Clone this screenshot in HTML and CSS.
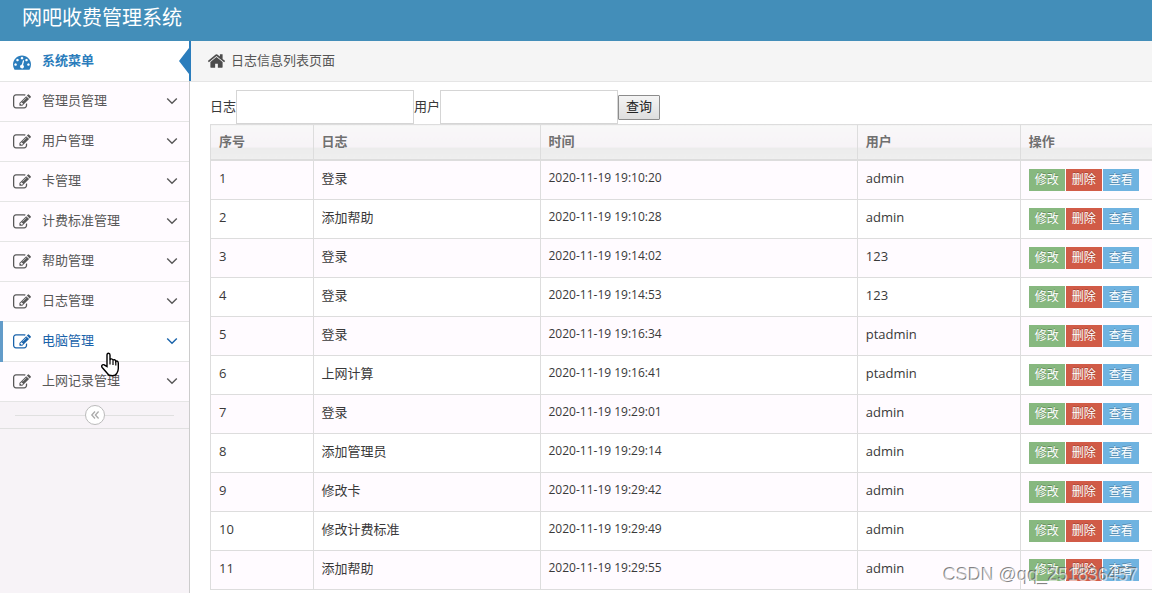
FILE: index.html
```html
<!DOCTYPE html>
<html lang="zh-CN">
<head>
<meta charset="utf-8">
<title>网吧收费管理系统</title>
<link rel="stylesheet" href="styles.css">
</head>
<body>
<svg class="defs" aria-hidden="true">
  <symbol id="edit" viewBox="0 0 1792 1792"><path d="M888 1184l116-116-152-152-116 116v56h96v96h56zm440-720q-16-16-33 1l-350 350q-17 17-1 33t33-1l350-350q17-17 1-33zm80 594v190q0 119-84.500 203.500t-203.500 84.500h-832q-119 0-203.500-84.500t-84.500-203.500v-832q0-119 84.500-203.500t203.500-84.500h832q63 0 117 25 15 7 18 23 3 17-9 29l-49 49q-14 14-32 8-23-6-45-6h-832q-66 0-113 47t-47 113v832q0 66 47 113t113 47h832q66 0 113-47t47-113v-126q0-13 9-22l64-64q15-15 35-7t20 29zm-96-738l288 288-672 672h-288v-288zm444 132l-92 92-288-288 92-92q28-28 68-28t68 28l152 152q28 28 28 68t-28 68z"/></symbol>
  <symbol id="down" viewBox="0 0 12 8"><path d="M1.200 1.500 6 6.200l4.800-4.700" fill="none" stroke="currentColor" stroke-width="1.400"/></symbol>
</svg>
<header class="navbar"><h1 class="brand">网吧收费管理系统</h1></header>
<div class="layout">
  <aside class="sidebar">
    <nav>
      <ul class="menu">
        <li class="item active"><a href="#"><svg class="icon" viewBox="0 0 1792 1792"><path d="M384 1152q0-53-37.500-90.500t-90.500-37.500-90.500 37.500-37.500 90.500 37.500 90.500 90.500 37.500 90.500-37.500 37.500-90.500zm192-448q0-53-37.500-90.500t-90.500-37.500-90.500 37.500-37.500 90.500 37.500 90.500 90.500 37.500 90.500-37.500 37.500-90.500zm428 481l101-382q6-26-7.500-48.500t-38.500-29.500-48 6.500-30 39.500l-101 382q-60 5-107 43.500t-63 98.500q-20 77 20 146t117 89 146-20 89-117q16-60-6-117t-72-91zm660-33q0-53-37.500-90.500t-90.500-37.500-90.500 37.500-37.500 90.500 37.500 90.500 90.500 37.500 90.500-37.500 37.500-90.500zm-640-640q0-53-37.500-90.500t-90.500-37.500-90.500 37.500-37.500 90.500 37.500 90.500 90.500 37.500 90.500-37.500 37.500-90.500zm448 192q0-53-37.500-90.500t-90.500-37.500-90.500 37.500-37.500 90.500 37.500 90.500 90.500 37.500 90.500-37.500 37.500-90.500zm320 448q0 261-141 483-19 29-54 29h-1402q-35 0-54-29-141-221-141-483 0-182 71-348t191-286 286-191 348-71 348 71 286 191 191 286 71 348z"/></svg><span>系统菜单</span></a><svg class="marker" viewBox="0 0 12 40"><path d="M10 0h2v40h-2v-7L0 20 10 7z"/></svg></li>
        <li class="item"><a href="#"><svg class="icon"><use href="#edit"/></svg><span>管理员管理</span><svg class="arrow"><use href="#down"/></svg></a></li>
        <li class="item"><a href="#"><svg class="icon"><use href="#edit"/></svg><span>用户管理</span><svg class="arrow"><use href="#down"/></svg></a></li>
        <li class="item"><a href="#"><svg class="icon"><use href="#edit"/></svg><span>卡管理</span><svg class="arrow"><use href="#down"/></svg></a></li>
        <li class="item"><a href="#"><svg class="icon"><use href="#edit"/></svg><span>计费标准管理</span><svg class="arrow"><use href="#down"/></svg></a></li>
        <li class="item"><a href="#"><svg class="icon"><use href="#edit"/></svg><span>帮助管理</span><svg class="arrow"><use href="#down"/></svg></a></li>
        <li class="item"><a href="#"><svg class="icon"><use href="#edit"/></svg><span>日志管理</span><svg class="arrow"><use href="#down"/></svg></a></li>
        <li class="item hover"><a href="#"><svg class="icon"><use href="#edit"/></svg><span>电脑管理</span><svg class="arrow"><use href="#down"/></svg></a></li>
        <li class="item"><a href="#"><svg class="icon"><use href="#edit"/></svg><span>上网记录管理</span><svg class="arrow"><use href="#down"/></svg></a></li>
      </ul>
    </nav>
    <div class="collapse"><button type="button" class="collapse-btn" aria-label="收起菜单"><svg viewBox="0 0 10 10"><path d="M5 1.500 1.800 5 5 8.500M8.600 1.500 5.400 5 8.600 8.500" fill="none" stroke="currentColor" stroke-width="1.300"/></svg></button></div>
  </aside>
  <main class="content">
    <div class="breadcrumb"><svg class="home" viewBox="0 0 1792 1792"><path d="M1472 992v480q0 26-19 45t-45 19h-384v-384h-256v384h-384q-26 0-45-19t-19-45v-480q0-1 .5-3t.5-3l575-474 575 474q1 2 1 6zm223-69l-62 74q-8 9-21 11h-3q-13 0-21-7l-692-577-692 577q-12 8-24 7-13-2-21-11l-62-74q-8-10-7-23.500t11-21.500l719-599q32-26 76-26t76 26l244 204v-195q0-14 9-23t23-9h192q14 0 23 9t9 23v408l219 182q10 8 11 21.500t-7 23.500z"/></svg><span>日志信息列表页面</span></div>
    <div class="page">
      <form class="search">
        <label for="log">日志</label><input id="log" type="text">
        <label for="user">用户</label><input id="user" type="text">
        <button type="button">查询</button>
      </form>
      <table class="grid">
        <colgroup><col class="c-no"><col class="c-log"><col class="c-time"><col class="c-user"><col></colgroup>
        <thead><tr><th>序号</th><th>日志</th><th>时间</th><th>用户</th><th>操作</th></tr></thead>
        <tbody>
          <tr><td>1</td><td>登录</td><td class="time">2020-11-19 19:10:20</td><td>admin</td><td><div class="ops"><button class="edit">修改</button><button class="del">删除</button><button class="view">查看</button></div></td></tr>
          <tr><td>2</td><td>添加帮助</td><td class="time">2020-11-19 19:10:28</td><td>admin</td><td><div class="ops"><button class="edit">修改</button><button class="del">删除</button><button class="view">查看</button></div></td></tr>
          <tr><td>3</td><td>登录</td><td class="time">2020-11-19 19:14:02</td><td>123</td><td><div class="ops"><button class="edit">修改</button><button class="del">删除</button><button class="view">查看</button></div></td></tr>
          <tr><td>4</td><td>登录</td><td class="time">2020-11-19 19:14:53</td><td>123</td><td><div class="ops"><button class="edit">修改</button><button class="del">删除</button><button class="view">查看</button></div></td></tr>
          <tr><td>5</td><td>登录</td><td class="time">2020-11-19 19:16:34</td><td>ptadmin</td><td><div class="ops"><button class="edit">修改</button><button class="del">删除</button><button class="view">查看</button></div></td></tr>
          <tr><td>6</td><td>上网计算</td><td class="time">2020-11-19 19:16:41</td><td>ptadmin</td><td><div class="ops"><button class="edit">修改</button><button class="del">删除</button><button class="view">查看</button></div></td></tr>
          <tr><td>7</td><td>登录</td><td class="time">2020-11-19 19:29:01</td><td>admin</td><td><div class="ops"><button class="edit">修改</button><button class="del">删除</button><button class="view">查看</button></div></td></tr>
          <tr><td>8</td><td>添加管理员</td><td class="time">2020-11-19 19:29:14</td><td>admin</td><td><div class="ops"><button class="edit">修改</button><button class="del">删除</button><button class="view">查看</button></div></td></tr>
          <tr><td>9</td><td>修改卡</td><td class="time">2020-11-19 19:29:42</td><td>admin</td><td><div class="ops"><button class="edit">修改</button><button class="del">删除</button><button class="view">查看</button></div></td></tr>
          <tr><td>10</td><td>修改计费标准</td><td class="time">2020-11-19 19:29:49</td><td>admin</td><td><div class="ops"><button class="edit">修改</button><button class="del">删除</button><button class="view">查看</button></div></td></tr>
          <tr><td>11</td><td>添加帮助</td><td class="time">2020-11-19 19:29:55</td><td>admin</td><td><div class="ops"><button class="edit">修改</button><button class="del">删除</button><button class="view">查看</button></div></td></tr>
        </tbody>
      </table>
    </div>
  </main>
</div>
<svg class="pointer" viewBox="0 0 18 24" aria-hidden="true"><path d="M6 14V2.500Q6 .7 7.500.7T9 2.500V7.500Q9.300 6.300 10.600 6.400T12 8Q12.400 7 13.500 7.200T14.800 9Q15.400 8.200 16.300 8.600T17.300 10.500V16Q17.300 18 16 20.500Q14.500 23.300 11.500 23.300Q7.500 23.300 6 20.500L1.200 15Q0 13.200 1.500 12.400T4 13z" fill="#fff" stroke="#000" stroke-width="1.400"/><path d="M9 7.500V12M12 8V12.500M14.800 9V13" fill="none" stroke="#000" stroke-width="1.200"/></svg>
<div class="watermark">CSDN @qq_251836457</div>
</body>
</html>
```
FILE: styles.css
```css
* { box-sizing: border-box; }
body {
  margin: 0;
  height: 100vh;
  overflow: hidden;
  display: flex;
  flex-direction: column;
  background: #fff;
  color: #393939;
  font: 13px/20px "Open Sans", "Noto Sans CJK SC", sans-serif;
}
button, input { font: inherit; }
.defs { position: absolute; width: 0; height: 0; }
svg { fill: currentColor; flex: none; }

.navbar { background: #438eb9; padding: 3px 22px 8px; }
.brand { margin: 0; color: #fff; font-size: 20px; line-height: 30px; font-weight: 400; }

.layout { flex: 1; min-height: 0; display: flex; }
.sidebar { width: 190px; flex: none; background: #f7f3f7; border-right: 1px solid #ccc; }
.menu { list-style: none; margin: 0; padding: 0; }
.item { position: relative; background: #fffbff; border-bottom: 1px solid #e5e5e5; }
.item a {
  display: flex;
  align-items: center;
  height: 39px;
  padding: 0 11px 0 13px;
  color: #585858;
  text-decoration: none;
}
.item span { flex: 1; padding-bottom: 4px; }
.icon { width: 18px; height: 18px; margin: 1px 11px 0 0; }
.arrow { width: 12px; height: 8px; margin-bottom: 2px; }
.active { background: #fff; }
.active a { height: 40px; color: #2b7dbc; font-weight: 700; }
.active span { padding-bottom: 3px; }
.marker { position: absolute; right: -2px; top: 0; width: 12px; height: 40px; color: #2b7dbc; }
.hover { background: #fff; }
.hover a { color: #1963aa; }
.hover::before { content: ""; position: absolute; left: 0; top: -1px; bottom: -1px; width: 3px; background: #629cc9; }
.collapse {
  display: flex;
  align-items: center;
  height: 27px;
  padding: 0 15px;
  border-bottom: 1px solid #e0e0e0;
}
.collapse::before, .collapse::after { content: ""; flex: 1; height: 1px; background: #e0e0e0; }
.collapse-btn {
  display: grid;
  place-items: center;
  width: 20px;
  height: 20px;
  padding: 0;
  border: 1px solid #bbb;
  border-radius: 50%;
  background: #fff;
  color: #aaa;
}
.collapse-btn svg { width: 10px; height: 10px; }

.content { flex: 1; min-width: 0; }
.breadcrumb {
  display: flex;
  align-items: center;
  gap: 5px;
  height: 41px;
  padding-left: 17px;
  background: #f5f5f5;
  border-bottom: 1px solid #e5e5e5;
  color: #555;
}
.breadcrumb span { padding-bottom: 2px; }
.home { width: 19px; height: 20px; color: #4c4c4c; }
.page { padding: 8px 0 0 20px; }
.search { display: flex; align-items: center; }
.search label { padding-bottom: 2px; }
.search input { width: 178px; height: 34px; padding: 5px 4px; border: 1px solid #d5d5d5; background: #fff; }
.search button {
  height: 25px;
  padding: 0 7px 2px;
  border: 1px solid #8c8c8c;
  border-radius: 1px;
  background: linear-gradient(#f4f4f4, #dedede);
  color: #222;
  line-height: 20px;
}

.grid { width: 100%; table-layout: fixed; border-collapse: collapse; }
.c-no { width: 10.9%; }
.c-log { width: 24.1%; }
.c-time { width: 33.7%; }
.c-user { width: 17.3%; }
.grid th, .grid td { border: 1px solid #ddd; border-right: 0; padding: 8px; text-align: left; }
.grid th {
  height: 35px;
  padding: 6px 8px 8px;
  border-bottom-width: 2px;
  background: linear-gradient(#f8f8f8 0, #f7f3f7 65%, #ececec 66%, #efefef 100%);
  color: #707070;
  font-weight: 700;
}
.grid td { height: 39px; padding: 7px 8px 11px; }
.grid .time { font-size: 12px; }
.grid td:last-child { padding: 8px; }
.grid tbody tr:nth-child(odd) { background: #fffbff; }
.ops { display: flex; gap: 1px; }
.ops button {
  width: 36px;
  height: 22px;
  padding: 0;
  border: 0;
  color: #fff;
  font-size: 12px;
  line-height: 20px;
  text-shadow: 0 -1px 0 rgba(0, 0, 0, .25);
}
.ops .edit { background: #87b87f; }
.ops .del { background: #d15b47; }
.ops .view { background: #6fb3e0; }

.pointer { position: absolute; left: 101px; top: 352px; width: 18px; height: 25px; }
.watermark {
  position: absolute;
  right: 14px;
  bottom: 8px;
  color: rgba(255, 255, 255, .6);
  font: 18px/20px "Liberation Sans", sans-serif;
  text-shadow: -1px -1px 0 rgba(90, 90, 90, .75);
}
```
